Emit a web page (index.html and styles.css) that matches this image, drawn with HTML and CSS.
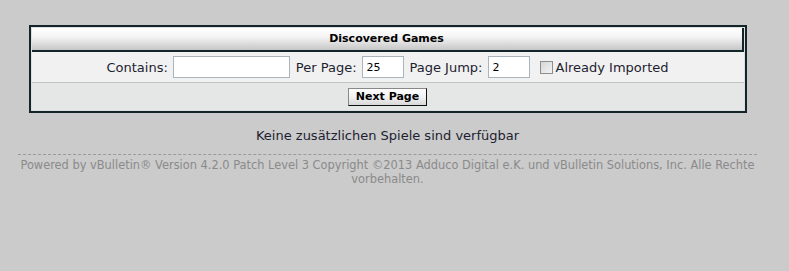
FILE: index.html
```html
<!DOCTYPE html>
<html lang="de">
<head>
    <meta charset="UTF-8">
    <title>Discovered Games</title>
    <link rel="stylesheet" href="styles.css">
</head>
<body>
<div class="page">
    <div class="tborder">
        <div class="thead">Discovered Games</div>
        <div class="filters">
            <label for="contains">Contains:</label>
            <input type="text" id="contains" class="wide">
            <label for="perpage">Per Page:</label>
            <input type="text" id="perpage" class="narrow" value="25">
            <label for="jump">Page Jump:</label>
            <input type="text" id="jump" class="narrow" value="2">
            <span class="check"><input type="checkbox" id="imported"><label for="imported">Already Imported</label></span>
        </div>
        <div class="actions">
            <button id="nextPage">Next Page</button>
        </div>
    </div>
    <p class="notice">Keine zusätzlichen Spiele sind verfügbar</p>
    <div class="footer">
        Powered by vBulletin® Version 4.2.0 Patch Level 3 Copyright ©2013 Adduco Digital e.K. und vBulletin Solutions, Inc. Alle Rechte vorbehalten.
    </div>
</div>
</body>
</html>
```

FILE: styles.css
```css
body {
    margin: 8px;
    background: #cbcbcb;
    font-family: "DejaVu Sans", Verdana, sans-serif;
    color: #1c2230;
}
.page {
    width: 739px;
    padding: 0 10px;
}
.tborder {
    width: 712px;
    margin: 17px auto 0;
    border: 2px solid #14252a;
    background: #dcdfdf;
    padding: 1px;
}
.thead {
    height: 22px;
    line-height: 22px;
    text-align: center;
    font-size: 11px;
    font-weight: bold;
    color: #000;
    background: linear-gradient(#ffffff, #f4f4f4 40%, #c6c6c6);
    border: 0 solid #14252a;
    border-width: 0 2px 2px 0;
}
.filters {
    display: flex;
    align-items: center;
    justify-content: center;
    gap: 5px;
    height: 30px;
    background: #f1f1f1;
    border-bottom: 1px solid #c2c4c4;
    font-size: 13px;
}
.filters input[type=text] {
    box-sizing: border-box;
    height: 22px;
    border: 1px solid #aab4bc;
    background: #fff;
    font-family: "DejaVu Sans", Verdana, sans-serif;
    font-size: 11px;
    padding: 2px 4px;
    margin-right: 1px;
}
.filters .wide {
    width: 117px;
}
.filters .narrow {
    width: 42px;
    border-color: #e8e8e8;
}
.check {
    display: flex;
    align-items: center;
    margin-left: 4px;
}
.check input {
    appearance: none;
    box-sizing: border-box;
    margin: 0 3px 0 0;
    width: 13px;
    height: 13px;
    border: 1px solid #8e8e8e;
    background: linear-gradient(135deg, #d6d6d6, #f4f4f4);
}
.actions {
    display: flex;
    justify-content: center;
    align-items: center;
    height: 27px;
    background: #e5e7e7;
}
#nextPage {
    font-family: "DejaVu Sans", Verdana, sans-serif;
    font-size: 11px;
    font-weight: bold;
    color: #000;
    height: 18px;
    width: 79px;
    padding: 0;
    border: 1px solid #000;
    border-color: #888 #111 #111 #888;
    background: linear-gradient(#ffffff, #f2f2f2 50%, #d8d8d8);
}
.notice {
    margin: 15px 0 0;
    text-align: center;
    font-size: 13px;
}
.footer {
    margin-top: 11px;
    border-top: 1px dashed #9a9a9a;
    padding-top: 3px;
    text-align: center;
    font-size: 11.4px;
    line-height: 14px;
    color: #8a8a8a;
}
```
